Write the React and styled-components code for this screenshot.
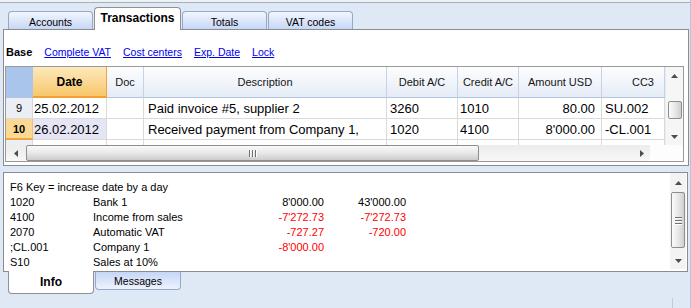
import React from 'react';
import styled, { createGlobalStyle } from 'styled-components';

const GlobalStyle = createGlobalStyle`
  html, body {
    margin: 0;
    padding: 0;
  }
  body {
    background: #dfe9f5;
    font-family: "Liberation Sans", Arial, sans-serif;
  }
`;

const Window = styled.div`
  width: 691px;
  height: 308px;
  box-sizing: border-box;
  background: #dfe9f5;
  border-right: 1px solid #b9c3d1;
  display: flex;
  flex-direction: column;
  overflow: hidden;
`;

const TopEdge = styled.div`
  height: 2px;
  background: #eef1f5;
  border-bottom: 1px solid #a9afb8;
`;

const TabRow = styled.div`
  display: flex;
  align-items: flex-end;
  gap: 1px;
  padding: 4px 0 0 8px;
  margin-bottom: -1px;
`;

const Tab = styled.div`
  box-sizing: border-box;
  display: flex;
  align-items: center;
  justify-content: center;
  color: #000;
  border: 1px solid ${p => (p.$active ? '#8f8f8f' : '#94a9c7')};
  border-bottom: none;
  border-radius: 4px 4px 0 0;
  ${p =>
    p.$active
      ? `
    width: 87px;
    height: 23px;
    padding-bottom: 2px;
    background: #fff;
    font-size: 12px;
    font-weight: bold;
    position: relative;
    z-index: 1;
  `
      : `
    width: 85px;
    height: 18px;
    margin-bottom: 1px;
    padding-top: 2px;
    font-size: 10.5px;
    background: linear-gradient(#f3f6fd, #c6d7f7);
  `}
`;

const Panel = styled.div`
  margin: 0 1px 0 3px;
  height: 137px;
  box-sizing: border-box;
  background: #fff;
  border: 1px solid #8c8c8c;
  display: flex;
  flex-direction: column;
`;

const LinkBar = styled.div`
  height: 36px;
  box-sizing: border-box;
  padding: 7px 0 0 2px;
  display: flex;
  align-items: center;
  gap: 12px;
`;

const BaseLabel = styled.span`
  font-size: 11px;
  font-weight: bold;
  color: #000;
`;

const ViewLink = styled.a`
  font-size: 10.5px;
  color: #0000ee;
  text-decoration: underline;
  cursor: pointer;
`;

const Grid = styled.div`
  margin: 0 4px 0 1px;
  height: 96px;
  box-sizing: border-box;
  border: 1px solid #9a9a9a;
  display: flex;
  flex-direction: column;
`;

const GridBody = styled.div`
  height: 78px;
  display: flex;
`;

const TableArea = styled.div`
  flex: 1;
  overflow: hidden;
`;

const Table = styled.div`
  display: grid;
  grid-template-columns: 27px 74px 37px 243px 71px 61px 83px 63px;
  grid-auto-rows: 21px;
  grid-template-rows: 31px;
`;

const HeadCell = styled.div`
  box-sizing: border-box;
  display: flex;
  align-items: center;
  justify-content: ${p => p.$align || 'center'};
  padding: 0 ${p => p.$pad || 0}px;
  font-size: 11px;
  color: #151515;
  background: linear-gradient(#fdfdfe, #e5ecf6);
  border-right: 1px solid #c4d4e8;
  border-bottom: 1px solid #b3c6df;
  white-space: nowrap;
`;

const DateHead = styled(HeadCell)`
  background: linear-gradient(#fde9bb, #f8c76c);
  border-right: 1px solid #f2a43a;
  border-bottom: 2px solid #f5a030;
  font-size: 12px;
  font-weight: bold;
  color: #000;
`;

const CornerHead = styled(HeadCell)`
  background: #aac5ec;
  border-right: 1px solid #aac5ec;
`;

const Cell = styled.div`
  box-sizing: border-box;
  display: flex;
  align-items: center;
  justify-content: ${p => (p.$right ? 'flex-end' : 'flex-start')};
  padding: ${p => (p.$right ? '0 6px 0 0' : `0 0 0 ${p.$pad ?? 3}px`)};
  font-size: 13px;
  color: #000;
  white-space: nowrap;
  overflow: hidden;
  background: ${p => p.$bg || '#fff'};
  border-right: 1px solid #dadada;
  border-bottom: 1px solid #dadada;
`;

const RowNum = styled(Cell)`
  justify-content: center;
  padding: 0;
  font-size: 11px;
  font-weight: ${p => (p.$current ? 'bold' : 'normal')};
  background: ${p => (p.$current ? '#fbd994' : '#eceef6')};
  border-bottom: ${p => (p.$current ? '2px solid #f2a43a' : '1px solid #dadada')};
  border-right-color: ${p => (p.$current ? '#f2c070' : '#d4d8e4')};
`;

const VScroll = styled.div`
  width: 18px;
  background: #f6f6f6;
  border-left: 1px solid #ececec;
  box-sizing: border-box;
  display: flex;
  flex-direction: column;
  align-items: center;
`;

const ArrowBtn = styled.div`
  height: ${p => p.$size || 17}px;
  width: ${p => p.$width || '100%'};
  display: flex;
  align-items: center;
  justify-content: center;
  flex-shrink: 0;
`;

const VThumb = styled.div`
  width: 14px;
  height: ${p => p.$h}px;
  margin-top: ${p => p.$top}px;
  box-sizing: border-box;
  border: 1px solid #8e8e8e;
  border-radius: 2px;
  background: linear-gradient(90deg, #fbfbfb, #e6e6e6 55%, #cfcfcf);
  display: flex;
  flex-direction: column;
  align-items: center;
  justify-content: center;
  gap: 2px;
  flex-shrink: 0;
`;

const Spacer = styled.div`
  flex: 1;
`;

const HScrollRow = styled.div`
  height: 16px;
  display: flex;
`;

const HScroll = styled.div`
  flex: 1;
  display: flex;
  align-items: stretch;
  background: linear-gradient(#ececec, #f7f7f7);
`;

const HThumb = styled.div`
  width: 453px;
  box-sizing: border-box;
  border: 1px solid #8e8e8e;
  border-radius: 2px;
  background: linear-gradient(#fafafa, #e8e8e8 50%, #cdcdcd);
  display: flex;
  align-items: center;
  justify-content: center;
  gap: 2px;
`;

const GripV = styled.span`
  width: 1px;
  height: 7px;
  background: #6f6f6f;
  box-shadow: 1px 0 0 #fff;
`;

const GripH = styled.span`
  width: 7px;
  height: 1px;
  background: #6f6f6f;
  box-shadow: 0 1px 0 #fff;
`;

const Corner = styled.div`
  width: 33px;
  background: #fdfdfd;
`;

const InfoPanel = styled.div`
  margin: 6px 2px 0 3px;
  height: 100px;
  box-sizing: border-box;
  background: #fff;
  border: 1px solid #8c8c8c;
  display: flex;
`;

const InfoText = styled.div`
  flex: 1;
  padding: 7px 0 0 6px;
  display: grid;
  grid-template-columns: 83px 150px 81px 82px;
  grid-auto-rows: 15px;
  align-content: start;
  font-size: 11px;
  line-height: 15px;
  color: #000;
`;

const InfoCell = styled.div`
  white-space: nowrap;
  text-align: ${p => (p.$right ? 'right' : 'left')};
  color: ${p => (p.$neg ? '#ff0000' : '#000')};
  grid-column: ${p => (p.$span ? '1 / -1' : 'auto')};
`;

const InfoScroll = styled.div`
  width: 16px;
  height: 96px;
  margin-right: 1px;
  background: #f3f3f3;
  display: flex;
  flex-direction: column;
  align-items: center;
`;

const BottomRow = styled.div`
  display: flex;
  align-items: flex-start;
  gap: 1px;
  padding-left: 8px;
  margin-top: -1px;
  flex: 1;
`;

const BottomTab = styled.div`
  box-sizing: border-box;
  display: flex;
  align-items: center;
  justify-content: center;
  color: #000;
  border: 1px solid ${p => (p.$active ? '#8f8f8f' : '#94a9c7')};
  border-top: none;
  border-radius: 0 0 4px 4px;
  ${p =>
    p.$active
      ? `
    width: 86px;
    height: 23px;
    background: #fff;
    font-size: 12px;
    font-weight: bold;
    position: relative;
    z-index: 1;
  `
      : `
    width: 86px;
    height: 18px;
    margin-top: 1px;
    font-size: 10.5px;
    background: linear-gradient(#c5d6f6, #eef3fd);
  `}
`;

const StatusSep = styled.div`
  align-self: flex-end;
  height: 10px;
  border-left: 1px solid #c2cad6;
  margin-right: 17px;
`;

const Arrow = ({ dir }) => {
  const pts = {
    up: '0,4 3.5,0 7,4',
    down: '0,0 3.5,4 7,0',
    left: '4,0 0,3.5 4,7',
    right: '0,0 4,3.5 0,7',
  }[dir];
  const vertical = dir === 'up' || dir === 'down';
  return (
    <svg width={vertical ? 7 : 4} height={vertical ? 4 : 7} viewBox={vertical ? '0 0 7 4' : '0 0 4 7'}>
      <polygon points={pts} fill="#4d4d4d" />
    </svg>
  );
};

const columns = [
  { label: 'Doc' },
  { label: 'Description' },
  { label: 'Debit A/C' },
  { label: 'Credit A/C' },
  { label: 'Amount USD' },
  { label: 'CC3', align: 'flex-end', pad: 10 },
];

const rows = [
  { num: '9', date: '25.02.2012', doc: '', desc: 'Paid invoice #5, supplier 2', debit: '3260', credit: '1010', amount: '80.00', cc3: 'SU.002' },
  { num: '10', date: '26.02.2012', doc: '', desc: 'Received payment from Company 1,', debit: '1020', credit: '4100', amount: "8'000.00", cc3: '-CL.001', current: true },
  { num: '', date: '', doc: '', desc: '', debit: '', credit: '', amount: '', cc3: '' },
];

const info = [
  ['1020', 'Bank 1', "8'000.00", "43'000.00"],
  ['4100', 'Income from sales', "-7'272.73", "-7'272.73"],
  ['2070', 'Automatic VAT', '-727.27', '-720.00'],
  [';CL.001', 'Company 1', "-8'000.00", ''],
  ['S10', 'Sales at 10%', '', ''],
];

export default function App() {
  return (
    <Window>
      <GlobalStyle />
      <TopEdge />
      <TabRow>
        <Tab>Accounts</Tab>
        <Tab $active>Transactions</Tab>
        <Tab>Totals</Tab>
        <Tab>VAT codes</Tab>
      </TabRow>

      <Panel>
        <LinkBar>
          <BaseLabel>Base</BaseLabel>
          <ViewLink>Complete VAT</ViewLink>
          <ViewLink>Cost centers</ViewLink>
          <ViewLink>Exp. Date</ViewLink>
          <ViewLink>Lock</ViewLink>
        </LinkBar>

        <Grid>
          <GridBody>
            <TableArea>
              <Table>
                <CornerHead />
                <DateHead>Date</DateHead>
                {columns.map(c => (
                  <HeadCell key={c.label} $align={c.align} $pad={c.pad}>
                    {c.label}
                  </HeadCell>
                ))}
                {rows.map((r, i) => (
                  <React.Fragment key={i}>
                    <RowNum $current={r.current}>{r.num}</RowNum>
                    <Cell $pad={1} $bg={r.current ? '#e5e5f5' : undefined}>{r.date}</Cell>
                    <Cell>{r.doc}</Cell>
                    <Cell $pad={4}>{r.desc}</Cell>
                    <Cell>{r.debit}</Cell>
                    <Cell $pad={2}>{r.credit}</Cell>
                    <Cell $right>{r.amount}</Cell>
                    <Cell>{r.cc3}</Cell>
                  </React.Fragment>
                ))}
              </Table>
            </TableArea>
            <VScroll>
              <ArrowBtn $size={17}><Arrow dir="up" /></ArrowBtn>
              <VThumb $h={18} $top={17} />
              <Spacer />
              <ArrowBtn $size={17}><Arrow dir="down" /></ArrowBtn>
            </VScroll>
          </GridBody>
          <HScrollRow>
            <HScroll>
              <ArrowBtn $width="20px"><Arrow dir="left" /></ArrowBtn>
              <HThumb>
                <GripV />
                <GripV />
                <GripV />
              </HThumb>
              <Spacer />
              <ArrowBtn $width="17px"><Arrow dir="right" /></ArrowBtn>
            </HScroll>
            <Corner />
          </HScrollRow>
        </Grid>
      </Panel>

      <InfoPanel>
        <InfoText>
          <InfoCell $span>F6 Key = increase date by a day</InfoCell>
          {info.map((r, i) => (
            <React.Fragment key={i}>
              <InfoCell>{r[0]}</InfoCell>
              <InfoCell>{r[1]}</InfoCell>
              <InfoCell $right $neg={r[2].startsWith('-')}>{r[2]}</InfoCell>
              <InfoCell $right $neg={r[3].startsWith('-')}>{r[3]}</InfoCell>
            </React.Fragment>
          ))}
        </InfoText>
        <InfoScroll>
          <ArrowBtn $size={19}><Arrow dir="up" /></ArrowBtn>
          <VThumb $h={56} $top={0}>
            <GripH />
            <GripH />
            <GripH />
          </VThumb>
          <Spacer />
          <ArrowBtn $size={17}><Arrow dir="down" /></ArrowBtn>
        </InfoScroll>
      </InfoPanel>

      <BottomRow>
        <BottomTab $active>Info</BottomTab>
        <BottomTab>Messages</BottomTab>
        <Spacer />
        <StatusSep />
      </BottomRow>
    </Window>
  );
}
